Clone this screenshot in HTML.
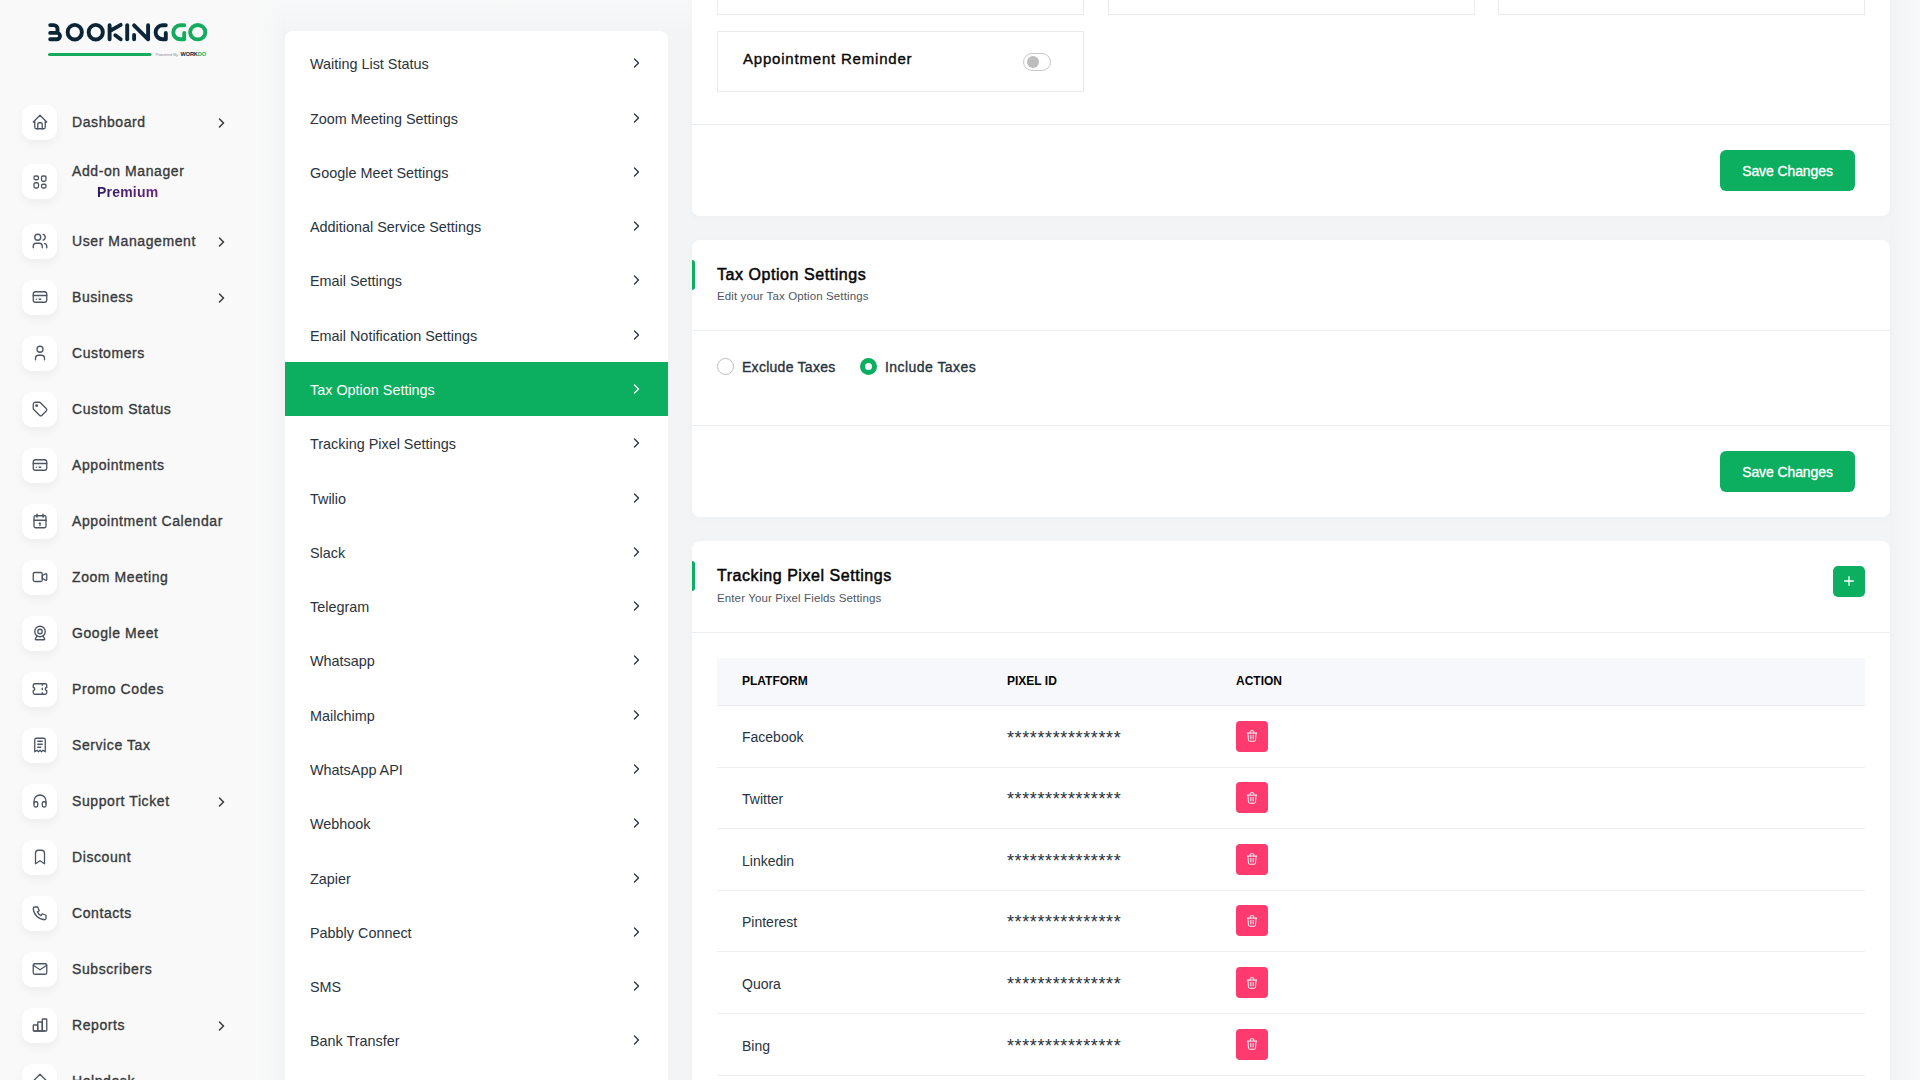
<!DOCTYPE html>
<html><head><meta charset="utf-8">
<style>
*{box-sizing:border-box;margin:0;padding:0}
svg{display:block}
html,body{width:1920px;height:1080px;overflow:hidden}
body{font-family:"Liberation Sans",sans-serif;background:#f3f4f6;color:#293240;position:relative}
#side{position:absolute;left:0;top:0;width:285px;height:1080px;background:linear-gradient(to right,#f9f9f9 0,#f9f9f9 255px,#f6f7f8 272px,#f2f3f5 285px)}
#topfade{position:absolute;left:255px;top:0;width:1695px;height:34px;background:linear-gradient(to bottom,rgba(248,249,249,.9),rgba(248,249,249,0))}
.ib{position:absolute;left:22px;width:35px;height:35px;border-radius:10px;background:#fff;box-shadow:0 5px 10px rgba(0,0,0,.045)}
.ib svg{position:absolute;left:8.5px;top:8.5px;width:18px;height:18px}
.stx{position:absolute;left:72px;font-size:14px;line-height:18px;font-weight:400;-webkit-text-stroke:.35px #383a3c;letter-spacing:.58px;color:#383a3c;white-space:nowrap}
.chev{position:absolute;left:218px;width:7px;height:10px}
#menu{position:absolute;left:285px;top:31px;width:383px;height:1100px;background:#fff;border-radius:8px}
.mi{position:absolute;left:0;width:383px;height:54px}
.mt{position:absolute;left:25px;font-size:14.4px;line-height:18px;color:#293240;white-space:nowrap}
.mc{position:absolute;left:348px;width:7px;height:10px}
.act{background:#0CAF60}
.card{position:absolute;left:692px;width:1198px;background:#fff;border-radius:8px;box-shadow:0 2px 10px rgba(30,40,50,.025)}
.hr{position:absolute;left:0;width:1198px;height:1px;background:#eceef0}
.btn{position:absolute;background:#0CAF60;color:#fff;border-radius:6px;font-size:14px;font-weight:400;-webkit-text-stroke:.3px #fff;letter-spacing:-.1px;text-align:center;white-space:nowrap}
.ttl{position:absolute;left:25px;font-size:16px;line-height:20px;font-weight:400;-webkit-text-stroke:.5px #060606;letter-spacing:.55px;color:#060606;white-space:nowrap}
.sub{position:absolute;left:25px;font-size:11.5px;line-height:14px;letter-spacing:.12px;color:#4f5662;white-space:nowrap}
.gbar{position:absolute;left:0;width:3px;height:30px;background:#0CAF60;border-radius:0 3px 3px 0}
.th{position:absolute;font-size:12px;line-height:14px;font-weight:700;color:#060606;white-space:nowrap}
.td{position:absolute;font-size:14px;line-height:18px;color:#293240;white-space:nowrap}
.ast{position:absolute;font-size:18px;line-height:18px;color:#293240;letter-spacing:.62px;white-space:nowrap}
.del{position:absolute;width:32px;height:31px;border-radius:4px;background:#FF3A6E}
.del svg{position:absolute;left:9px;top:8.5px;width:14px;height:14px}
.box{position:absolute;border:1px solid #ebebeb;background:#fff}
</style></head>
<body>

<div id="side">
<svg style="position:absolute;left:0;top:0" width="280" height="80" viewBox="0 0 280 80"><g fill="none" stroke="#0b2536" stroke-width="3.9" stroke-linecap="round" stroke-linejoin="round"><path d="M50.2 25.1H53.6a3.9 3.9 0 0 1 3.9 3.9V32.9M50.2 32.9H56.8a3.2 3.2 0 0 1 0 6.4H50.2"/><ellipse cx="74.75" cy="32.2" rx="7.1" ry="7.35"/><ellipse cx="95.75" cy="32.2" rx="7.1" ry="7.35"/><path d="M109.6 25.3V39.3M110.7 30.5L120.7 24.9M115.3 35.3L120.7 39.3"/><path d="M127.2 25.3V39.3"/><path d="M134.1 35V39.3M134.1 25.3L148.1 39.3M148.1 25.3V39.3"/><path d="M165.8 25.3H162.6a7 7 0 0 0 0 14H165.8V33"/></g><g fill="none" stroke="#14ab5e" stroke-width="3.9" stroke-linecap="round" stroke-linejoin="round"><path d="M184.2 25.3H180.3a7 7 0 0 0 0 14H184.2V33"/><ellipse cx="197.75" cy="32.2" rx="7.6" ry="7.2"/><path d="M49.5 54.5H150" stroke-width="3"/></g><text x="155.5" y="55.8" font-size="4.2" fill="#8a8f95" font-family="Liberation Sans">Powered By</text><text x="180.5" y="56.2" font-size="5.6" font-weight="700" fill="#0b2536" font-family="Liberation Sans" letter-spacing="-.1">WORK<tspan fill="#14ab5e">DO</tspan></text></svg>
<div class="ib" style="top:104.5px"><svg viewBox="0 0 24 24" fill="none" stroke="#4d5562" stroke-width="1.75" stroke-linecap="round" stroke-linejoin="round"><path d="M5 12l-2 0l9 -9l9 9l-2 0"/><path d="M5 12v7a2 2 0 0 0 2 2h10a2 2 0 0 0 2 -2v-7"/><path d="M9 21v-6a2 2 0 0 1 2 -2h2a2 2 0 0 1 2 2v6"/></svg></div>
<div class="stx" style="top:113px">Dashboard</div>
<div class="chev" style="top:118px"><svg width="7" height="10" viewBox="0 0 7 10" fill="none" stroke="#383838" stroke-width="1.5" stroke-linecap="round" stroke-linejoin="round"><path d="M1.5 1L5.5 5L1.5 9"/></svg></div>
<div class="ib" style="top:164.0px"><svg viewBox="0 0 24 24" fill="none" stroke="#4d5562" stroke-width="1.75" stroke-linecap="round" stroke-linejoin="round"><path d="M4 6a2 2 0 0 1 2 -2h2a2 2 0 0 1 2 2v1a2 2 0 0 1 -2 2h-2a2 2 0 0 1 -2 -2z"/><path d="M4 15a2 2 0 0 1 2 -2h2a2 2 0 0 1 2 2v3a2 2 0 0 1 -2 2h-2a2 2 0 0 1 -2 -2z"/><path d="M14 6a2 2 0 0 1 2 -2h2a2 2 0 0 1 2 2v3a2 2 0 0 1 -2 2h-2a2 2 0 0 1 -2 -2z"/><path d="M14 17a2 2 0 0 1 2 -2h2a2 2 0 0 1 2 2v1a2 2 0 0 1 -2 2h-2a2 2 0 0 1 -2 -2z"/></svg></div>
<div class="stx" style="top:162.0px">Add-on Manager</div>
<div class="stx" style="top:183.0px;left:97px;font-weight:700;-webkit-text-stroke:0;letter-spacing:.2px;background:linear-gradient(90deg,#2f1b62,#6a2282);-webkit-background-clip:text;background-clip:text;color:transparent">Premium</div>
<div class="ib" style="top:223.5px"><svg viewBox="0 0 24 24" fill="none" stroke="#4d5562" stroke-width="1.75" stroke-linecap="round" stroke-linejoin="round"><path d="M5 7a4 4 0 1 0 8 0a4 4 0 1 0 -8 0"/><path d="M3 21v-2a4 4 0 0 1 4 -4h4a4 4 0 0 1 4 4v2"/><path d="M16 3.13a4 4 0 0 1 0 7.75"/><path d="M21 21v-2a4 4 0 0 0 -3 -3.85"/></svg></div>
<div class="stx" style="top:232px">User Management</div>
<div class="chev" style="top:237px"><svg width="7" height="10" viewBox="0 0 7 10" fill="none" stroke="#383838" stroke-width="1.5" stroke-linecap="round" stroke-linejoin="round"><path d="M1.5 1L5.5 5L1.5 9"/></svg></div>
<div class="ib" style="top:279.5px"><svg viewBox="0 0 24 24" fill="none" stroke="#4d5562" stroke-width="1.75" stroke-linecap="round" stroke-linejoin="round"><rect x="3" y="5" width="18" height="14" rx="3"/><path d="M3 10h18"/><path d="M7 15h.01"/><path d="M11 15h2"/></svg></div>
<div class="stx" style="top:288px">Business</div>
<div class="chev" style="top:293px"><svg width="7" height="10" viewBox="0 0 7 10" fill="none" stroke="#383838" stroke-width="1.5" stroke-linecap="round" stroke-linejoin="round"><path d="M1.5 1L5.5 5L1.5 9"/></svg></div>
<div class="ib" style="top:335.5px"><svg viewBox="0 0 24 24" fill="none" stroke="#4d5562" stroke-width="1.75" stroke-linecap="round" stroke-linejoin="round"><path d="M8 7a4 4 0 1 0 8 0a4 4 0 0 0 -8 0"/><path d="M6 21v-2a4 4 0 0 1 4 -4h4a4 4 0 0 1 4 4v2"/></svg></div>
<div class="stx" style="top:344px">Customers</div>
<div class="ib" style="top:391.5px"><svg viewBox="0 0 24 24" fill="none" stroke="#4d5562" stroke-width="1.75" stroke-linecap="round" stroke-linejoin="round"><path d="M6.5 7.5a1 1 0 1 0 2 0a1 1 0 1 0 -2 0"/><path d="M3 6v5.172a2 2 0 0 0 .586 1.414l7.71 7.71a2.41 2.41 0 0 0 3.408 0l5.592 -5.592a2.41 2.41 0 0 0 0 -3.408l-7.71 -7.71a2 2 0 0 0 -1.414 -.586h-5.172a3 3 0 0 0 -3 3z"/></svg></div>
<div class="stx" style="top:400px">Custom Status</div>
<div class="ib" style="top:447.5px"><svg viewBox="0 0 24 24" fill="none" stroke="#4d5562" stroke-width="1.75" stroke-linecap="round" stroke-linejoin="round"><rect x="3" y="5" width="18" height="14" rx="3"/><path d="M3 10h18"/><path d="M7 15h.01"/><path d="M11 15h2"/></svg></div>
<div class="stx" style="top:456px">Appointments</div>
<div class="ib" style="top:503.5px"><svg viewBox="0 0 24 24" fill="none" stroke="#4d5562" stroke-width="1.75" stroke-linecap="round" stroke-linejoin="round"><path d="M4 7a2 2 0 0 1 2 -2h12a2 2 0 0 1 2 2v12a2 2 0 0 1 -2 2h-12a2 2 0 0 1 -2 -2v-12z"/><path d="M16 3v4"/><path d="M8 3v4"/><path d="M4 11h16"/><path d="M11 15h1"/><path d="M12 15v3"/></svg></div>
<div class="stx" style="top:512px">Appointment Calendar</div>
<div class="ib" style="top:559.5px"><svg viewBox="0 0 24 24" fill="none" stroke="#4d5562" stroke-width="1.75" stroke-linecap="round" stroke-linejoin="round"><path d="M15 10l4.553 -2.276a1 1 0 0 1 1.447 .894v6.764a1 1 0 0 1 -1.447 .894l-4.553 -2.276v-4z"/><path d="M3 8a2 2 0 0 1 2 -2h8a2 2 0 0 1 2 2v8a2 2 0 0 1 -2 2h-8a2 2 0 0 1 -2 -2z"/></svg></div>
<div class="stx" style="top:568px">Zoom Meeting</div>
<div class="ib" style="top:615.5px"><svg viewBox="0 0 24 24" fill="none" stroke="#4d5562" stroke-width="1.75" stroke-linecap="round" stroke-linejoin="round"><path d="M5 10a7 7 0 1 0 14 0a7 7 0 1 0 -14 0"/><path d="M9 10a3 3 0 1 0 6 0a3 3 0 1 0 -6 0"/><path d="M8 16l-2.091 3.486a1 1 0 0 0 .857 1.514h10.468a1 1 0 0 0 .857 -1.514l-2.091 -3.486"/></svg></div>
<div class="stx" style="top:624px">Google Meet</div>
<div class="ib" style="top:671.5px"><svg viewBox="0 0 24 24" fill="none" stroke="#4d5562" stroke-width="1.75" stroke-linecap="round" stroke-linejoin="round"><path d="M15 5l0 2"/><path d="M15 11l0 2"/><path d="M15 17l0 2"/><path d="M5 5h14a2 2 0 0 1 2 2v3a2 2 0 0 0 0 4v3a2 2 0 0 1 -2 2h-14a2 2 0 0 1 -2 -2v-3a2 2 0 0 0 0 -4v-3a2 2 0 0 1 2 -2"/></svg></div>
<div class="stx" style="top:680px">Promo Codes</div>
<div class="ib" style="top:727.5px"><svg viewBox="0 0 24 24" fill="none" stroke="#4d5562" stroke-width="1.75" stroke-linecap="round" stroke-linejoin="round"><path d="M5 21v-16a2 2 0 0 1 2 -2h10a2 2 0 0 1 2 2v16l-3 -2l-2 2l-2 -2l-2 2l-2 -2l-3 2"/><path d="M9 7h6"/><path d="M9 11h6"/><path d="M9 15h4"/></svg></div>
<div class="stx" style="top:736px">Service Tax</div>
<div class="ib" style="top:783.5px"><svg viewBox="0 0 24 24" fill="none" stroke="#4d5562" stroke-width="1.75" stroke-linecap="round" stroke-linejoin="round"><path d="M4 15a2 2 0 0 1 2 -2h1a2 2 0 0 1 2 2v3a2 2 0 0 1 -2 2h-1a2 2 0 0 1 -2 -2z"/><path d="M15 15a2 2 0 0 1 2 -2h1a2 2 0 0 1 2 2v3a2 2 0 0 1 -2 2h-1a2 2 0 0 1 -2 -2z"/><path d="M4 15v-3a8 8 0 0 1 16 0v3"/></svg></div>
<div class="stx" style="top:792px">Support Ticket</div>
<div class="chev" style="top:797px"><svg width="7" height="10" viewBox="0 0 7 10" fill="none" stroke="#383838" stroke-width="1.5" stroke-linecap="round" stroke-linejoin="round"><path d="M1.5 1L5.5 5L1.5 9"/></svg></div>
<div class="ib" style="top:839.5px"><svg viewBox="0 0 24 24" fill="none" stroke="#4d5562" stroke-width="1.75" stroke-linecap="round" stroke-linejoin="round"><path d="M18 7v14l-6 -4l-6 4v-14a4 4 0 0 1 4 -4h4a4 4 0 0 1 4 4z"/></svg></div>
<div class="stx" style="top:848px">Discount</div>
<div class="ib" style="top:895.5px"><svg viewBox="0 0 24 24" fill="none" stroke="#4d5562" stroke-width="1.75" stroke-linecap="round" stroke-linejoin="round"><path d="M5 4h4l2 5l-2.5 1.5a11 11 0 0 0 5 5l1.5 -2.5l5 2v4a2 2 0 0 1 -2 2a16 16 0 0 1 -15 -15a2 2 0 0 1 2 -2"/></svg></div>
<div class="stx" style="top:904px">Contacts</div>
<div class="ib" style="top:951.5px"><svg viewBox="0 0 24 24" fill="none" stroke="#4d5562" stroke-width="1.75" stroke-linecap="round" stroke-linejoin="round"><path d="M3 7a2 2 0 0 1 2 -2h14a2 2 0 0 1 2 2v10a2 2 0 0 1 -2 2h-14a2 2 0 0 1 -2 -2v-10z"/><path d="M3 7l9 6l9 -6"/></svg></div>
<div class="stx" style="top:960px">Subscribers</div>
<div class="ib" style="top:1007.5px"><svg viewBox="0 0 24 24" fill="none" stroke="#4d5562" stroke-width="1.75" stroke-linecap="round" stroke-linejoin="round"><path d="M3 13a1 1 0 0 1 1 -1h4a1 1 0 0 1 1 1v6a1 1 0 0 1 -1 1h-4a1 1 0 0 1 -1 -1z"/><path d="M9 9a1 1 0 0 1 1 -1h4a1 1 0 0 1 1 1v10a1 1 0 0 1 -1 1h-4a1 1 0 0 1 -1 -1z"/><path d="M15 5a1 1 0 0 1 1 -1h4a1 1 0 0 1 1 1v14a1 1 0 0 1 -1 1h-4a1 1 0 0 1 -1 -1z"/><path d="M4 20h14"/></svg></div>
<div class="stx" style="top:1016px">Reports</div>
<div class="chev" style="top:1021px"><svg width="7" height="10" viewBox="0 0 7 10" fill="none" stroke="#383838" stroke-width="1.5" stroke-linecap="round" stroke-linejoin="round"><path d="M1.5 1L5.5 5L1.5 9"/></svg></div>
<div class="ib" style="top:1063.5px"><svg viewBox="0 0 24 24" fill="none" stroke="#4d5562" stroke-width="1.75" stroke-linecap="round" stroke-linejoin="round"><path d="M5 12l-2 0l9 -9l9 9l-2 0"/><path d="M5 12v7a2 2 0 0 0 2 2h10a2 2 0 0 0 2 -2v-7"/></svg></div>
<div class="stx" style="top:1072px">Helpdesk</div>
</div>
<div id="topfade"></div>
<div style="position:absolute;left:1890px;top:0;width:30px;height:1080px;background:linear-gradient(to right,#f2f3f5,#f7f8f8)"></div>
<div id="menu">
<div class="mi" style="top:5.30px"><div class="mt" style="top:19px;color:#293240">Waiting List Status</div><div class="mc" style="top:22px"><svg width="7" height="10" viewBox="0 0 7 10" fill="none" stroke="#293240" stroke-width="1.3" stroke-linecap="round" stroke-linejoin="round"><path d="M1.5 1L5.5 5L1.5 9"/></svg></div></div>
<div class="mi" style="top:59.58px"><div class="mt" style="top:19px;color:#293240">Zoom Meeting Settings</div><div class="mc" style="top:22px"><svg width="7" height="10" viewBox="0 0 7 10" fill="none" stroke="#293240" stroke-width="1.3" stroke-linecap="round" stroke-linejoin="round"><path d="M1.5 1L5.5 5L1.5 9"/></svg></div></div>
<div class="mi" style="top:113.86px"><div class="mt" style="top:19px;color:#293240">Google Meet Settings</div><div class="mc" style="top:22px"><svg width="7" height="10" viewBox="0 0 7 10" fill="none" stroke="#293240" stroke-width="1.3" stroke-linecap="round" stroke-linejoin="round"><path d="M1.5 1L5.5 5L1.5 9"/></svg></div></div>
<div class="mi" style="top:168.14px"><div class="mt" style="top:19px;color:#293240">Additional Service Settings</div><div class="mc" style="top:22px"><svg width="7" height="10" viewBox="0 0 7 10" fill="none" stroke="#293240" stroke-width="1.3" stroke-linecap="round" stroke-linejoin="round"><path d="M1.5 1L5.5 5L1.5 9"/></svg></div></div>
<div class="mi" style="top:222.42px"><div class="mt" style="top:19px;color:#293240">Email Settings</div><div class="mc" style="top:22px"><svg width="7" height="10" viewBox="0 0 7 10" fill="none" stroke="#293240" stroke-width="1.3" stroke-linecap="round" stroke-linejoin="round"><path d="M1.5 1L5.5 5L1.5 9"/></svg></div></div>
<div class="mi" style="top:276.70px"><div class="mt" style="top:19px;color:#293240">Email Notification Settings</div><div class="mc" style="top:22px"><svg width="7" height="10" viewBox="0 0 7 10" fill="none" stroke="#293240" stroke-width="1.3" stroke-linecap="round" stroke-linejoin="round"><path d="M1.5 1L5.5 5L1.5 9"/></svg></div></div>
<div class="mi act" style="top:330.98px"><div class="mt" style="top:19px;color:#fff">Tax Option Settings</div><div class="mc" style="top:22px"><svg width="7" height="10" viewBox="0 0 7 10" fill="none" stroke="#fff" stroke-width="1.3" stroke-linecap="round" stroke-linejoin="round"><path d="M1.5 1L5.5 5L1.5 9"/></svg></div></div>
<div class="mi" style="top:385.26px"><div class="mt" style="top:19px;color:#293240">Tracking Pixel Settings</div><div class="mc" style="top:22px"><svg width="7" height="10" viewBox="0 0 7 10" fill="none" stroke="#293240" stroke-width="1.3" stroke-linecap="round" stroke-linejoin="round"><path d="M1.5 1L5.5 5L1.5 9"/></svg></div></div>
<div class="mi" style="top:439.54px"><div class="mt" style="top:19px;color:#293240">Twilio</div><div class="mc" style="top:22px"><svg width="7" height="10" viewBox="0 0 7 10" fill="none" stroke="#293240" stroke-width="1.3" stroke-linecap="round" stroke-linejoin="round"><path d="M1.5 1L5.5 5L1.5 9"/></svg></div></div>
<div class="mi" style="top:493.82px"><div class="mt" style="top:19px;color:#293240">Slack</div><div class="mc" style="top:22px"><svg width="7" height="10" viewBox="0 0 7 10" fill="none" stroke="#293240" stroke-width="1.3" stroke-linecap="round" stroke-linejoin="round"><path d="M1.5 1L5.5 5L1.5 9"/></svg></div></div>
<div class="mi" style="top:548.10px"><div class="mt" style="top:19px;color:#293240">Telegram</div><div class="mc" style="top:22px"><svg width="7" height="10" viewBox="0 0 7 10" fill="none" stroke="#293240" stroke-width="1.3" stroke-linecap="round" stroke-linejoin="round"><path d="M1.5 1L5.5 5L1.5 9"/></svg></div></div>
<div class="mi" style="top:602.38px"><div class="mt" style="top:19px;color:#293240">Whatsapp</div><div class="mc" style="top:22px"><svg width="7" height="10" viewBox="0 0 7 10" fill="none" stroke="#293240" stroke-width="1.3" stroke-linecap="round" stroke-linejoin="round"><path d="M1.5 1L5.5 5L1.5 9"/></svg></div></div>
<div class="mi" style="top:656.66px"><div class="mt" style="top:19px;color:#293240">Mailchimp</div><div class="mc" style="top:22px"><svg width="7" height="10" viewBox="0 0 7 10" fill="none" stroke="#293240" stroke-width="1.3" stroke-linecap="round" stroke-linejoin="round"><path d="M1.5 1L5.5 5L1.5 9"/></svg></div></div>
<div class="mi" style="top:710.94px"><div class="mt" style="top:19px;color:#293240">WhatsApp API</div><div class="mc" style="top:22px"><svg width="7" height="10" viewBox="0 0 7 10" fill="none" stroke="#293240" stroke-width="1.3" stroke-linecap="round" stroke-linejoin="round"><path d="M1.5 1L5.5 5L1.5 9"/></svg></div></div>
<div class="mi" style="top:765.22px"><div class="mt" style="top:19px;color:#293240">Webhook</div><div class="mc" style="top:22px"><svg width="7" height="10" viewBox="0 0 7 10" fill="none" stroke="#293240" stroke-width="1.3" stroke-linecap="round" stroke-linejoin="round"><path d="M1.5 1L5.5 5L1.5 9"/></svg></div></div>
<div class="mi" style="top:819.50px"><div class="mt" style="top:19px;color:#293240">Zapier</div><div class="mc" style="top:22px"><svg width="7" height="10" viewBox="0 0 7 10" fill="none" stroke="#293240" stroke-width="1.3" stroke-linecap="round" stroke-linejoin="round"><path d="M1.5 1L5.5 5L1.5 9"/></svg></div></div>
<div class="mi" style="top:873.78px"><div class="mt" style="top:19px;color:#293240">Pabbly Connect</div><div class="mc" style="top:22px"><svg width="7" height="10" viewBox="0 0 7 10" fill="none" stroke="#293240" stroke-width="1.3" stroke-linecap="round" stroke-linejoin="round"><path d="M1.5 1L5.5 5L1.5 9"/></svg></div></div>
<div class="mi" style="top:928.06px"><div class="mt" style="top:19px;color:#293240">SMS</div><div class="mc" style="top:22px"><svg width="7" height="10" viewBox="0 0 7 10" fill="none" stroke="#293240" stroke-width="1.3" stroke-linecap="round" stroke-linejoin="round"><path d="M1.5 1L5.5 5L1.5 9"/></svg></div></div>
<div class="mi" style="top:982.34px"><div class="mt" style="top:19px;color:#293240">Bank Transfer</div><div class="mc" style="top:22px"><svg width="7" height="10" viewBox="0 0 7 10" fill="none" stroke="#293240" stroke-width="1.3" stroke-linecap="round" stroke-linejoin="round"><path d="M1.5 1L5.5 5L1.5 9"/></svg></div></div>
<div class="mi" style="top:1036.62px"><div class="mt" style="top:19px;color:#293240">Paypal</div><div class="mc" style="top:22px"><svg width="7" height="10" viewBox="0 0 7 10" fill="none" stroke="#293240" stroke-width="1.3" stroke-linecap="round" stroke-linejoin="round"><path d="M1.5 1L5.5 5L1.5 9"/></svg></div></div>
</div>
<div class="card" style="top:-200px;height:416px">
<div class="box" style="left:25px;top:100px;width:367px;height:115px"></div>
<div class="box" style="left:416px;top:100px;width:367px;height:115px"></div>
<div class="box" style="left:806px;top:100px;width:367px;height:115px"></div>
<div class="box" style="left:25px;top:231px;width:367px;height:61px"></div>
<div style="position:absolute;left:51px;top:250px;font-size:15px;line-height:18px;font-weight:400;-webkit-text-stroke:.35px #060606;letter-spacing:.8px;color:#060606">Appointment Reminder</div>
<div style="position:absolute;left:331px;top:253px;width:28px;height:18px;border:1px solid #c9c9c9;border-radius:9px"><div style="position:absolute;left:3px;top:2px;width:12px;height:12px;border-radius:50%;background:#bdbdbd"></div></div>
<div class="hr" style="top:324px"></div>
<div class="btn" style="left:1028px;top:350px;width:135px;height:41px;line-height:43px">Save Changes</div>
</div>
<div class="card" style="top:240px;height:277px">
<div class="gbar" style="top:20px"></div>
<div class="ttl" style="top:25px">Tax Option Settings</div>
<div class="sub" style="top:49px">Edit your Tax Option Settings</div>
<div class="hr" style="top:90px"></div>
<div style="position:absolute;left:25px;top:118px;width:17px;height:17px;border:1px solid #bfbfbf;border-radius:50%"></div>
<div style="position:absolute;left:50px;top:118px;font-size:14px;line-height:18px;font-weight:400;-webkit-text-stroke:.35px #293240;letter-spacing:.27px;color:#293240">Exclude Taxes</div>
<div style="position:absolute;left:168px;top:118px;width:17px;height:17px;border:5px solid #0CAF60;border-radius:50%;background:#fff"></div>
<div style="position:absolute;left:193px;top:118px;font-size:14px;line-height:18px;font-weight:400;-webkit-text-stroke:.35px #293240;letter-spacing:.45px;color:#293240">Include Taxes</div>
<div class="hr" style="top:185px"></div>
<div class="btn" style="left:1028px;top:211px;width:135px;height:41px;line-height:43px">Save Changes</div>
</div>
<div class="card" style="top:541px;height:600px">
<div class="gbar" style="top:20px"></div>
<div class="ttl" style="top:25px">Tracking Pixel Settings</div>
<div class="sub" style="top:50px">Enter Your Pixel Fields Settings</div>
<div class="btn" style="left:1141px;top:25px;width:32px;height:31px;border-radius:5px"><svg style="position:absolute;left:11px;top:10px" width="10" height="10" viewBox="0 0 10 10" stroke="#fff" stroke-width="1.3" stroke-linecap="round"><path d="M5 .7V9.3M.7 5H9.3"/></svg></div>
<div class="hr" style="top:91px"></div>
<div style="position:absolute;left:25px;top:117px;width:1148px;height:47.5px;background:#f6f8fb;border-bottom:1px solid #e9ebee"></div>
<div class="th" style="left:50px;top:133px">PLATFORM</div>
<div class="th" style="left:315px;top:133px">PIXEL ID</div>
<div class="th" style="left:544px;top:133px">ACTION</div>
<div class="td" style="left:50px;top:187.20px">Facebook</div>
<div class="ast" style="left:315px;top:187.5px">***************</div>
<div class="del" style="left:544px;top:179.5px"><svg viewBox="0 0 24 24" fill="none" stroke="#fff" stroke-width="1.6" stroke-linecap="round" stroke-linejoin="round"><path d="M4 7l16 0"/><path d="M10 11l0 6"/><path d="M14 11l0 6"/><path d="M5 7l1 12a2 2 0 0 0 2 2h8a2 2 0 0 0 2 -2l1 -12"/><path d="M9 7v-3a1 1 0 0 1 1 -1h4a1 1 0 0 1 1 1v3"/></svg></div>
<div class="hr" style="left:25px;width:1148px;top:225.5px"></div>
<div class="td" style="left:50px;top:248.86px">Twitter</div>
<div class="ast" style="left:315px;top:249.15999999999997px">***************</div>
<div class="del" style="left:544px;top:241.15999999999997px"><svg viewBox="0 0 24 24" fill="none" stroke="#fff" stroke-width="1.6" stroke-linecap="round" stroke-linejoin="round"><path d="M4 7l16 0"/><path d="M10 11l0 6"/><path d="M14 11l0 6"/><path d="M5 7l1 12a2 2 0 0 0 2 2h8a2 2 0 0 0 2 -2l1 -12"/><path d="M9 7v-3a1 1 0 0 1 1 -1h4a1 1 0 0 1 1 1v3"/></svg></div>
<div class="hr" style="left:25px;width:1148px;top:287.15999999999997px"></div>
<div class="td" style="left:50px;top:310.52px">Linkedin</div>
<div class="ast" style="left:315px;top:310.82px">***************</div>
<div class="del" style="left:544px;top:302.82px"><svg viewBox="0 0 24 24" fill="none" stroke="#fff" stroke-width="1.6" stroke-linecap="round" stroke-linejoin="round"><path d="M4 7l16 0"/><path d="M10 11l0 6"/><path d="M14 11l0 6"/><path d="M5 7l1 12a2 2 0 0 0 2 2h8a2 2 0 0 0 2 -2l1 -12"/><path d="M9 7v-3a1 1 0 0 1 1 -1h4a1 1 0 0 1 1 1v3"/></svg></div>
<div class="hr" style="left:25px;width:1148px;top:348.82px"></div>
<div class="td" style="left:50px;top:372.18px">Pinterest</div>
<div class="ast" style="left:315px;top:372.48px">***************</div>
<div class="del" style="left:544px;top:364.48px"><svg viewBox="0 0 24 24" fill="none" stroke="#fff" stroke-width="1.6" stroke-linecap="round" stroke-linejoin="round"><path d="M4 7l16 0"/><path d="M10 11l0 6"/><path d="M14 11l0 6"/><path d="M5 7l1 12a2 2 0 0 0 2 2h8a2 2 0 0 0 2 -2l1 -12"/><path d="M9 7v-3a1 1 0 0 1 1 -1h4a1 1 0 0 1 1 1v3"/></svg></div>
<div class="hr" style="left:25px;width:1148px;top:410.48px"></div>
<div class="td" style="left:50px;top:433.84px">Quora</div>
<div class="ast" style="left:315px;top:434.14px">***************</div>
<div class="del" style="left:544px;top:426.14px"><svg viewBox="0 0 24 24" fill="none" stroke="#fff" stroke-width="1.6" stroke-linecap="round" stroke-linejoin="round"><path d="M4 7l16 0"/><path d="M10 11l0 6"/><path d="M14 11l0 6"/><path d="M5 7l1 12a2 2 0 0 0 2 2h8a2 2 0 0 0 2 -2l1 -12"/><path d="M9 7v-3a1 1 0 0 1 1 -1h4a1 1 0 0 1 1 1v3"/></svg></div>
<div class="hr" style="left:25px;width:1148px;top:472.14px"></div>
<div class="td" style="left:50px;top:495.50px">Bing</div>
<div class="ast" style="left:315px;top:495.79999999999995px">***************</div>
<div class="del" style="left:544px;top:487.79999999999995px"><svg viewBox="0 0 24 24" fill="none" stroke="#fff" stroke-width="1.6" stroke-linecap="round" stroke-linejoin="round"><path d="M4 7l16 0"/><path d="M10 11l0 6"/><path d="M14 11l0 6"/><path d="M5 7l1 12a2 2 0 0 0 2 2h8a2 2 0 0 0 2 -2l1 -12"/><path d="M9 7v-3a1 1 0 0 1 1 -1h4a1 1 0 0 1 1 1v3"/></svg></div>
<div class="hr" style="left:25px;width:1148px;top:533.8px"></div>
</div>
</body></html>
